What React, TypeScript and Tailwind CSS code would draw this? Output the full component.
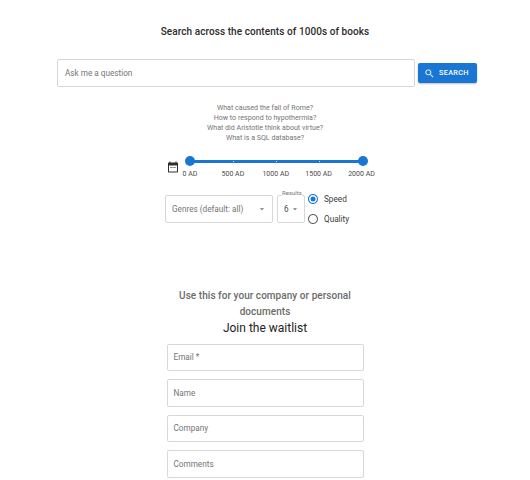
import React from "react";

const labels = ["0 AD", "500 AD", "1000 AD", "1500 AD", "2000 AD"];
const fields = ["Email *", "Name", "Company", "Comments"];

function Caret() {
  return (
    <svg width="10" height="10" viewBox="0 0 24 24" fill="#757575">
      <path d="M7 10l5 5 5-5z" />
    </svg>
  );
}

function Radio({ on, label }: { on: boolean; label: string }) {
  return (
    <div className="flex items-center h-[20px] gap-[5px]">
      <svg width="12" height="12" viewBox="0 0 24 24" fill={on ? "#1976d2" : "#616161"}>
        <path d="M12 2C6.48 2 2 6.48 2 12s4.48 10 10 10 10-4.48 10-10S17.52 2 12 2zm0 18c-4.42 0-8-3.58-8-8s3.58-8 8-8 8 3.58 8 8-3.58 8-8 8z" />
        {on && <circle cx="12" cy="12" r="5" />}
      </svg>
      <span className="text-[8.2px] text-[#3c3c3c]">{label}</span>
    </div>
  );
}

export default function App() {
  return (
    <div className="w-[530px] h-[480px] overflow-hidden bg-white flex flex-col items-center font-['Roboto',sans-serif]">
      <h1 className="mt-[25px] h-[13px] leading-[13px] text-[10px] font-medium tracking-[0.07px] text-[#2b2b2b]">
        Search across the contents of 1000s of books
      </h1>

      <div className="mt-[21px] w-[420px] flex items-center gap-[3px] ml-[4px]">
        <div className="w-[358px] h-[28px] border border-[#d8d8d8] rounded-[2px] flex items-center pl-[7px] text-[8.2px] text-[#757575]">
          Ask me a question
        </div>
        <div className="w-[59px] h-[20.5px] bg-[#1976d2] rounded-[2px] shadow-[0_1px_2px_rgba(0,0,0,0.25)] flex items-center pl-[6px] gap-[4px] text-white text-[7.3px] font-medium tracking-[0.3px]">
          <svg width="11" height="11" viewBox="0 0 24 24" fill="#fff">
            <path d="M15.5 14h-.79l-.28-.27C15.41 12.59 16 11.11 16 9.5 16 5.91 13.09 3 9.5 3S3 5.91 3 9.5 5.91 16 9.5 16c1.61 0 3.09-.59 4.23-1.57l.27.28v.79l5 4.99L20.49 19l-4.99-5zm-6 0C7.01 14 5 11.99 5 9.5S7.01 5 9.5 5 14 7.01 14 9.5 11.99 14 9.5 14z" />
          </svg>
          SEARCH
        </div>
      </div>

      <div className="mt-[16px] flex flex-col items-center text-[7.1px] leading-[10px] text-[#757575]">
        <span>What caused the fall of Rome?</span>
        <span>How to respond to hypothermia?</span>
        <span>What did Aristotle think about virtue?</span>
        <span>What is a SQL database?</span>
      </div>

      <div className="mt-[13px] self-start ml-[166.5px] flex items-start gap-[11.5px]">
        <svg className="mt-[5px] shrink-0" width="12" height="12" viewBox="0 0 24 24" fill="#2e2e2e">
          <path d="M20 3h-1V1h-2v2H7V1H5v2H4c-1.1 0-2 .9-2 2v16c0 1.1.9 2 2 2h16c1.1 0 2-.9 2-2V5c0-1.1-.9-2-2-2zm0 18H4V9h16v12zM7 12h2v2H7zm4 0h2v2h-2zm4 0h2v2h-2z" />
        </svg>
        <div className="w-[173px] flex flex-col">
          <div className="relative h-[10px] flex items-center">
            <div className="w-full h-[3px] bg-[#1976d2]" />
            <div className="absolute left-[-5px] top-0 w-[10px] h-[10px] rounded-full bg-[#1976d2]" />
            <div className="absolute right-[-5px] top-0 w-[10px] h-[10px] rounded-full bg-[#1976d2]" />
            <div className="absolute left-[43px] top-[4.5px] w-[1px] h-[1px] bg-[#cfe0f3]" />
            <div className="absolute left-[86px] top-[4.5px] w-[1px] h-[1px] bg-[#cfe0f3]" />
            <div className="absolute left-[129px] top-[4.5px] w-[1px] h-[1px] bg-[#cfe0f3]" />
          </div>
          <div className="mt-[4px] mr-[1.5px] flex justify-between text-[7px] leading-[9px] text-[#4a4a4a]">
            {labels.map((l) => (
              <span key={l} className="w-0 flex justify-center whitespace-nowrap">
                {l}
              </span>
            ))}
          </div>
        </div>
      </div>

      <div className="mt-[12px] w-[200px] flex items-start gap-[4px] h-[32px]">
        <div className="w-[108px] h-[28px] mt-[4px] border border-[#d8d8d8] rounded-[2px] flex items-center justify-between pl-[6px] pr-[5px] text-[8.2px] text-[#757575]">
          Genres (default: all)
          <Caret />
        </div>
        <div className="relative w-[28px] h-[28px] mt-[4px] border border-[#d8d8d8] rounded-[2px] flex items-center gap-[1px] pl-[6px] text-[8.2px] text-[#4a4a4a]">
          6
          <Caret />
          <span className="absolute left-[4px] top-[-7px] bg-white text-[6px] leading-[8px] text-[#757575]">Results</span>
        </div>
        <div className="flex flex-col ml-[-2px] mt-[-2px]">
          <Radio on label="Speed" />
          <Radio on={false} label="Quality" />
        </div>
      </div>

      <div className="mt-[65px] w-[200px] text-center text-[10px] leading-[16px] font-medium text-[#6b6b6b] tracking-[0.05px]">
        Use this for your company or personal documents
      </div>
      <div className="mt-[-0.5px] h-[16px] leading-[16px] text-[12px] text-[#222]">Join the waitlist</div>

      <div className="mt-[8.2px] flex flex-col gap-[8.1px]">
        {fields.map((f) => (
          <div
            key={f}
            className="w-[197px] h-[27.5px] border border-[#d8d8d8] rounded-[2px] flex items-center pl-[6px] text-[8.2px] text-[#757575]"
          >
            {f}
          </div>
        ))}
      </div>
    </div>
  );
}
